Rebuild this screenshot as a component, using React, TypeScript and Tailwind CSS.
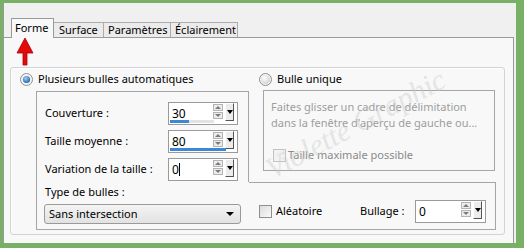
const font = { fontFamily: '"Noto Sans", "Open Sans", sans-serif' };

function Radio({ checked }: { checked?: boolean }) {
  return (
    <svg width="13" height="13" viewBox="0 0 13 13" className="shrink-0">
      <defs>
        <radialGradient id={checked ? "rg1" : "rg0"} cx="40%" cy="35%" r="70%">
          <stop offset="0" stopColor={checked ? "#9fd0f5" : "#ffffff"} />
          <stop offset="1" stopColor={checked ? "#1b5fae" : "#cfcfcf"} />
        </radialGradient>
      </defs>
      <circle cx="6.5" cy="6.5" r="6" fill="#f4f4f4" stroke="#8f8f8f" />
      <circle cx="6.5" cy="6.5" r={checked ? 3.6 : 4.6} fill={`url(#${checked ? "rg1" : "rg0"})`} />
    </svg>
  );
}

function Check({ disabled }: { disabled?: boolean }) {
  return (
    <div
      className={`shrink-0 w-[13px] h-[13px] border ${
        disabled ? "border-[#c4c4c4] bg-[#f2f2f2]" : "border-[#8f8f8f] bg-gradient-to-br from-[#dcdcdc] to-[#fafafa]"
      }`}
    />
  );
}

function Spin({ value, bar, track, caret }: { value: string; bar?: number; track?: number; caret?: boolean }) {
  return (
    <div className="relative flex h-[23px] border border-[#9a9a9a] bg-white">
      <div className="flex-1 pl-[3px] pt-[3px] text-[12px] leading-[16px] text-black">
        {value}
        {caret && <span className="inline-block w-px h-[13px] bg-black align-[-2px]" />}
      </div>
      <div className="flex flex-col mt-[1px] mr-[1px] w-[10px]">
        <div className="h-[7px] border border-[#b4b4b4] bg-[#ececec] flex items-center justify-center">
          <div className="w-0 h-0 border-l-[3px] border-r-[3px] border-b-[3px] border-l-transparent border-r-transparent border-b-[#7a7a7a]" />
        </div>
        <div className="h-[7px] mt-px border border-[#b4b4b4] bg-[#ececec] flex items-center justify-center">
          <div className="w-0 h-0 border-l-[3px] border-r-[3px] border-t-[3px] border-l-transparent border-r-transparent border-t-[#7a7a7a]" />
        </div>
      </div>
      <div className="mr-[3px] ml-[1px] w-[9px] h-[18px] border-t border-l border-t-white border-l-white border-r border-b border-r-[#555] border-b-[#555] bg-[#ececec] flex items-center justify-center">
        <div className="w-0 h-0 border-l-[3px] border-r-[3px] border-t-[4px] border-l-transparent border-r-transparent border-t-black" />
      </div>
      {bar !== undefined && (
        <div className="absolute left-[1px] bottom-[1px] h-[3px] bg-[#e3e3e3]" style={{ width: track }}>
          <div className="h-full bg-[#3b88d6]" style={{ width: bar }} />
        </div>
      )}
    </div>
  );
}

export default function App() {
  return (
    <div className="w-[524px] h-[248px] bg-[#78b066] pt-[3px] pl-[3px] overflow-hidden" style={font}>
      <div className="relative w-[513px] h-[240px] bg-[#f0f0f0] border-l border-[#9a9a9a] pt-[15px] text-[11px] text-black">
        {/* tabs */}
        <div className="relative z-10 flex items-end h-[20px] ml-[7px] -mb-px">
          <div className="h-[20px] w-[43px] bg-[#f8f8f8] border-t border-l border-r border-[#9a9a9a] pl-[3px] leading-[17px]">
            Forme
          </div>
          <div className="h-[15px] w-[50px] mb-px bg-[#ebebeb] border-t border-r border-[#acacac] pl-[5px] leading-[14px]">
            Surface
          </div>
          <div className="h-[15px] w-[67px] mb-px bg-[#ebebeb] border-t border-r border-[#acacac] pl-[4px] leading-[14px]">
            Paramètres
          </div>
          <div className="h-[15px] w-[67px] mb-px bg-[#ebebeb] border-t border-r border-[#acacac] pl-[4px] leading-[14px]">
            Éclairement
          </div>
        </div>

        {/* panel */}
        <div className="w-[510px] h-[206px] bg-[#f8f8f8] border-t border-r border-[#9a9a9a] pt-[29px] pl-[6px]">
          <div className="w-[495px] h-[168px] rounded-[3px] border border-[#d3d3d3] shadow-[inset_1px_1px_0_#ffffff]">
            <div className="flex items-center h-[23px]">
              <div className="flex items-center w-[248px] pl-[9px] gap-[5px]">
                <Radio checked />
                <span>Plusieurs bulles automatiques</span>
              </div>
              <div className="flex items-center gap-[5px]">
                <Radio />
                <span>Bulle unique</span>
              </div>
            </div>

            <div className="flex items-start">
              {/* left inner box */}
              <div className="ml-[25px] w-[213px] h-[139px] border-l border-b border-[#a5a5a5] flex flex-col">
                <div className="w-[212px] h-[91px] border-t border-r border-[#a5a5a5] pt-[10px] flex flex-col gap-[5px]">
                  <div className="flex items-center">
                    <span className="w-[131px] pl-[8px]">Couverture :</span>
                    <div className="w-[70px]">
                      <Spin value="30" bar={19} track={44} />
                    </div>
                  </div>
                  <div className="flex items-center">
                    <span className="w-[131px] pl-[8px]">Taille moyenne :</span>
                    <div className="w-[70px]">
                      <Spin value="80" bar={56} track={56} />
                    </div>
                  </div>
                  <div className="flex items-center">
                    <span className="w-[131px] pl-[8px]">Variation de la taille :</span>
                    <div className="w-[70px]">
                      <Spin value="0" caret />
                    </div>
                  </div>
                </div>
                <div className="pt-[2px] pl-[8px] leading-[16px]">Type de bulles :</div>
                <div className="mt-[4px] ml-[7px] w-[197px] h-[20px] rounded-[3px] border border-[#9a9a9a] bg-gradient-to-b from-[#f4f4f4] to-[#e2e2e2] flex items-center justify-between pl-[4px] pr-[6px]">
                  <span>Sans intersection</span>
                  <div className="w-0 h-0 border-l-[4px] border-r-[4px] border-t-[4px] border-l-transparent border-r-transparent border-t-black" />
                </div>
              </div>

              {/* right column */}
              <div className="w-[247px] flex flex-col">
                <div className="-mt-px ml-[14px] w-[232px] h-[81px] border border-[#a5a5a5] pl-[7px] pt-[8px] text-[#9d9d9d] leading-[16px]">
                  <div className="whitespace-nowrap">Faites glisser un cadre de délimitation</div>
                  <div className="whitespace-nowrap">dans la fenêtre d'aperçu de gauche ou...</div>
                  <div className="flex items-center mt-[16px] ml-[2px] gap-[2px] text-[#8a8a8a]">
                    <Check disabled />
                    <span>Taille maximale possible</span>
                  </div>
                </div>
                <div className="mt-[11px] w-[247px] h-[48px] border-t border-r border-b border-[#a5a5a5]">
                  <div className="flex items-center mt-[17px] h-[23px] pl-[10px]">
                    <Check />
                    <span className="ml-[4px] w-[84px]">Aléatoire</span>
                    <span className="w-[55px]">Bullage :</span>
                    <div className="w-[71px]">
                      <Spin value="0" />
                    </div>
                  </div>
                </div>
              </div>
            </div>
          </div>
        </div>

        {/* watermark */}
        <div
          className="absolute left-[252px] top-[98px] text-[30px] italic text-[#c8c8c8] opacity-40 -rotate-[28deg] whitespace-nowrap pointer-events-none"
          style={{ fontFamily: '"Liberation Serif", serif' }}
        >
          Violette Graphic
        </div>

        {/* red arrow */}
        <svg className="absolute left-[12px] top-[35px]" width="18" height="28" viewBox="0 0 18 28">
          <path d="M9 0 L17 15 L11 15 L11 27 L7 27 L7 15 L1 15 Z" fill="#e10b0b" stroke="#b00000" strokeWidth="0.8" />
        </svg>
      </div>
    </div>
  );
}
